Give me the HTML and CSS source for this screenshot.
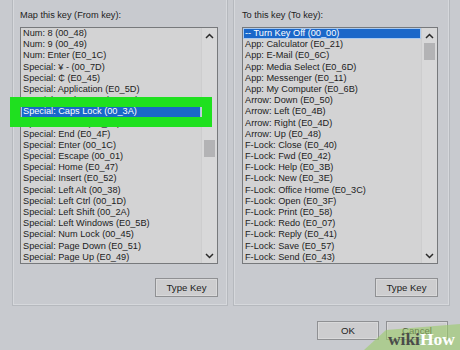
FILE: index.html
```html
<!DOCTYPE html>
<html lang="en">
<head>
    <meta charset="UTF-8">
    <title>Map key</title>
    <link rel="stylesheet" href="styles.css">
</head>
<body>

    <div class="dialog">

        <div class="groups">

            <div class="group group-left">
                <div class="label">Map this key (From key):</div>

                <div class="listbox">
                    <ul class="rows">
                        <li>Num: 8 (00_48)</li>
                        <li>Num: 9 (00_49)</li>
                        <li>Num: Enter (E0_1C)</li>
                        <li>Special: ¥ - (00_7D)</li>
                        <li>Special: ₵ (E0_45)</li>
                        <li>Special: Application (E0_5D)</li>
                        <li>Special: Backspace (00_0E)</li>
                        <li class="selected">Special: Caps Lock (00_3A)</li>
                        <li>Special: Delete (E0_53)</li>
                        <li>Special: End (E0_4F)</li>
                        <li>Special: Enter (00_1C)</li>
                        <li>Special: Escape (00_01)</li>
                        <li>Special: Home (E0_47)</li>
                        <li>Special: Insert (E0_52)</li>
                        <li>Special: Left Alt (00_38)</li>
                        <li>Special: Left Ctrl (00_1D)</li>
                        <li>Special: Left Shift (00_2A)</li>
                        <li>Special: Left Windows (E0_5B)</li>
                        <li>Special: Num Lock (00_45)</li>
                        <li>Special: Page Down (E0_51)</li>
                        <li>Special: Page Up (E0_49)</li>
                    </ul>
                    <div class="scrollbar">
                        <div class="arrow">
                            <svg width="9" height="6" viewBox="0 0 9 6"><polyline points="1,5 4.5,1.5 8,5" fill="none" stroke="#2a2a2a" stroke-width="1.5"/></svg>
                        </div>
                        <div class="track">
                            <div class="thumb thumb-left"></div>
                        </div>
                        <div class="arrow">
                            <svg width="9" height="6" viewBox="0 0 9 6"><polyline points="1,1 4.5,4.5 8,1" fill="none" stroke="#2a2a2a" stroke-width="1.5"/></svg>
                        </div>
                    </div>
                    <!-- green marker round the chosen key -->
                    <div class="marker"></div>
                </div>

                <div class="actions">
                    <button class="btn">Type Key</button>
                </div>
            </div>

            <div class="group group-right">
                <div class="label">To this key (To key):</div>

                <div class="listbox">
                    <ul class="rows">
                        <li class="selected">-- Turn Key Off (00_00)</li>
                        <li>App: Calculator (E0_21)</li>
                        <li>App: E-Mail (E0_6C)</li>
                        <li>App: Media Select (E0_6D)</li>
                        <li>App: Messenger (E0_11)</li>
                        <li>App: My Computer (E0_6B)</li>
                        <li>Arrow: Down (E0_50)</li>
                        <li>Arrow: Left (E0_4B)</li>
                        <li>Arrow: Right (E0_4D)</li>
                        <li>Arrow: Up (E0_48)</li>
                        <li>F-Lock: Close (E0_40)</li>
                        <li>F-Lock: Fwd (E0_42)</li>
                        <li>F-Lock: Help (E0_3B)</li>
                        <li>F-Lock: New (E0_3E)</li>
                        <li>F-Lock: Office Home (E0_3C)</li>
                        <li>F-Lock: Open (E0_3F)</li>
                        <li>F-Lock: Print (E0_58)</li>
                        <li>F-Lock: Redo (E0_07)</li>
                        <li>F-Lock: Reply (E0_41)</li>
                        <li>F-Lock: Save (E0_57)</li>
                        <li>F-Lock: Send (E0_43)</li>
                    </ul>
                    <div class="scrollbar">
                        <div class="arrow">
                            <svg width="9" height="6" viewBox="0 0 9 6"><polyline points="1,5 4.5,1.5 8,5" fill="none" stroke="#2a2a2a" stroke-width="1.5"/></svg>
                        </div>
                        <div class="track">
                            <div class="thumb"></div>
                        </div>
                        <div class="arrow">
                            <svg width="9" height="6" viewBox="0 0 9 6"><polyline points="1,1 4.5,4.5 8,1" fill="none" stroke="#2a2a2a" stroke-width="1.5"/></svg>
                        </div>
                    </div>
                </div>

                <div class="actions">
                    <button class="btn">Type Key</button>
                </div>
            </div>

        </div>

        <div class="footer">
            <button class="btn btn-wide">OK</button>
            <button class="btn btn-wide">Cancel</button>
        </div>

    </div>

    <!-- watermark -->
    <div class="watermark">
        <svg class="watermark-bg" width="96" height="26" viewBox="0 0 96 26">
            <polygon points="0,26 22,6 96,0 96,26" fill="#9ccc6c" fill-opacity="0.62"/>
        </svg>
        <span class="wm-text"><span class="wm-wiki">wiki</span><span class="wm-how">How</span></span>
    </div>

</body>
</html>
```

FILE: styles.css
```css
* {
    margin: 0px;
    padding: 0px;
    box-sizing: border-box;
}

body {
    width: 460px;
    height: 350px;
    overflow: hidden;
    background-color: #c8cacf;
    font-family: "Liberation Sans", Arial, sans-serif;
    font-size: 9.2px;
    color: #1c1c1c;
    position: relative;
}

.dialog {
    display: flex;
    flex-direction: column;
}

.groups {
    display: flex;
    gap: 5px;
    padding-left: 12px;
}

.group {
    height: 306px;
    border: 1px solid #b6b9be;
    border-top: none;
    box-shadow: inset 1px 0 0 #d6d8dc, inset -1px 0 0 #d6d8dc, inset 0 -1px 0 #d6d8dc;
    display: flex;
    flex-direction: column;
}

.group-left {
    width: 216px;
    padding-left: 7px;
    padding-right: 9px;
}

.group-right {
    width: 217px;
    padding-left: 8px;
    padding-right: 11px;
}

.label {
    margin-top: 9px;
    height: 12px;
    line-height: 12px;
    color: #222;
}

.listbox {
    margin-top: 6px;
    height: 237px;
    border: 1px solid #77797c;
    background-color: #d3d3d4;
    display: flex;
    position: relative;
}

.rows {
    list-style: none;
    flex: 1;
    overflow: hidden;
}

.rows li {
    height: 11.2px;
    line-height: 11.2px;
    padding-left: 2px;
    white-space: nowrap;
}

.rows li.selected {
    background-color: #1a67c9;
    color: #fff;
    outline: 1px solid #a9c9ef;
    outline-offset: -1px;
}

.scrollbar {
    width: 16px;
    display: flex;
    flex-direction: column;
    background-color: #d8d8d9;
    border-left: 1px solid #cdcdce;
}

.arrow {
    height: 15px;
    display: flex;
    align-items: center;
    justify-content: center;
}

.track {
    flex: 1;
    padding: 0px 2px;
}

.thumb {
    height: 17px;
    background-color: #b3b3b5;
}

.thumb-left {
    margin-top: 97px;
}

.marker {
    position: absolute;
    left: -11px;
    top: 69px;
    width: 202px;
    height: 30px;
    border: 10px solid #1fe01f;
}

.actions {
    display: flex;
    justify-content: flex-end;
    margin-top: 14px;
}

.btn {
    width: 63px;
    height: 19px;
    border: 1px solid #8f9093;
    background-color: #cdcdcf;
    box-shadow: inset 0 0 0 1px #d9d9da;
    font-family: "Liberation Sans", Arial, sans-serif;
    font-size: 9.6px;
    color: #1c1c1c;
}

.footer {
    display: flex;
    justify-content: flex-end;
    gap: 7px;
    padding-right: 12px;
    margin-top: 15px;
}

.btn-wide {
    width: 62px;
}

.watermark {
    position: absolute;
    right: 0px;
    bottom: 0px;
    width: 96px;
    height: 26px;
}

.watermark-bg {
    position: absolute;
    left: 0px;
    top: 0px;
}

.wm-text {
    position: absolute;
    right: 5px;
    bottom: 2px;
    font-family: "Liberation Serif", serif;
    font-weight: bold;
    font-size: 17.5px;
    line-height: 18px;
}

.wm-wiki {
    color: #4a4b4a;
}

.wm-how {
    color: #fff;
}
```
